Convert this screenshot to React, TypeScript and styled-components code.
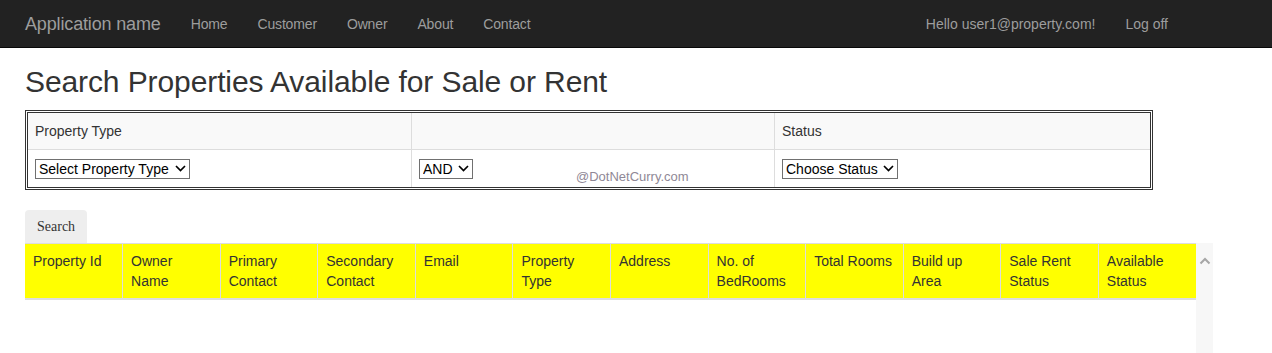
import * as React from "react"
import styled, { createGlobalStyle } from "styled-components"

const GlobalStyle = createGlobalStyle`
  html, body {
    margin: 0;
    padding: 0;
    overflow: hidden;
    background: #fff;
  }
  body {
    font-family: "Liberation Sans", Arial, sans-serif;
    font-size: 14px;
    line-height: 20px;
    color: #333;
  }
`

const NavBar = styled.nav`
  display: flex;
  align-items: center;
  height: 47px;
  padding: 0 89px 0 10px;
  background: #222;
  border-bottom: 1px solid #080808;
`

const Brand = styled.a`
  padding: 0 15px;
  font-size: 18px;
  line-height: 20px;
  letter-spacing: -0.15px;
  color: #9d9d9d;
  text-decoration: none;
`

const NavList = styled.ul<{ $right?: boolean }>`
  display: flex;
  margin: 0;
  padding: 0;
  list-style: none;
  margin-left: ${(p) => (p.$right ? "auto" : "0")};
`

const NavLink = styled.a<{ $tight?: boolean }>`
  display: block;
  padding: 14px 15px;
  color: #9d9d9d;
  text-decoration: none;
  line-height: 20px;
  letter-spacing: ${(p) => (p.$tight ? "-0.15px" : "0")};
`

const Page = styled.main`
  padding: 0 25px;
`

const Title = styled.h2`
  margin: 17px 0 12px;
  font-size: 30px;
  font-weight: 500;
  line-height: 33px;
  letter-spacing: -0.1px;
  color: #333;
`

const FilterWrap = styled.div`
  position: relative;
  width: 1128px;
  margin-bottom: 20px;
`

const FilterTable = styled.table`
  width: 1128px;
  table-layout: fixed;
  border-collapse: separate;
  border-spacing: 0;
  border: 3px double #333;
`

const FilterCell = styled.td<{ $head?: boolean; $last?: boolean }>`
  height: 20px;
  padding: 8px 8px 8px 7px;
  background: ${(p) => (p.$head ? "#f9f9f9" : "#fff")};
  border-right: ${(p) => (p.$last ? "none" : "1px solid #ddd")};
  border-bottom: ${(p) => (p.$head ? "1px solid #ddd" : "none")};
  vertical-align: middle;
`

const SelectWrap = styled.span`
  position: relative;
  display: inline-block;
  vertical-align: middle;
`

const Select = styled.select<{ $w: number }>`
  appearance: none;
  -webkit-appearance: none;
  display: block;
  width: ${(p) => p.$w}px;
  height: 20px;
  padding: 0 18px 0 3px;
  margin: 0;
  border: 1px solid #707070;
  border-radius: 0;
  background: #fff;
  color: #000;
  font-family: "Liberation Sans", Arial, sans-serif;
  font-size: 14px;
  line-height: 18px;
`

const Chevron = styled.svg`
  position: absolute;
  right: 4px;
  top: 6px;
  pointer-events: none;
`

const Watermark = styled.span`
  position: absolute;
  left: 551px;
  top: 57px;
  font-size: 13px;
  color: #8f8896;
`

const SearchButton = styled.button`
  display: block;
  height: 33px;
  padding: 0 12px;
  border: none;
  border-radius: 4px 4px 0 0;
  background: #eee;
  color: #333;
  font-family: "Liberation Serif", "Times New Roman", serif;
  font-size: 14px;
`

const GridRow = styled.div`
  display: flex;
  height: 110px;
`

const ResultTable = styled.table`
  width: 1171px;
  table-layout: fixed;
  border-collapse: collapse;
  align-self: flex-start;
`

const HeadCell = styled.th`
  padding: 7px 8px 7px;
  background: #ffff00;
  color: #333;
  font-weight: normal;
  text-align: left;
  vertical-align: top;
  line-height: 20px;
  border-top: 1px solid #ddd;
  border-left: 1px solid #ddd;
  border-bottom: 2px solid #ddd;
  &:first-child {
    border-left: none;
  }
`

const ScrollTrack = styled.div`
  display: flex;
  justify-content: center;
  width: 17px;
  padding-top: 14px;
  background: #f7f7f7;
`

const columns = [
  "Property Id",
  "Owner Name",
  "Primary Contact",
  "Secondary Contact",
  "Email",
  "Property Type",
  "Address",
  "No. of BedRooms",
  "Total Rooms",
  "Build up Area",
  "Sale Rent Status",
  "Available Status",
]

const Dropdown = (props: { width: number; options: string[] }) => (
  <SelectWrap>
    <Select $w={props.width} defaultValue={props.options[0]}>
      {props.options.map((o) => (
        <option key={o}>{o}</option>
      ))}
    </Select>
    <Chevron width="11" height="7" viewBox="0 0 11 7">
      <path d="M1 1l4.5 4.5L10 1" fill="none" stroke="#000" strokeWidth="1.7" />
    </Chevron>
  </SelectWrap>
)

export default function App() {
  return (
    <>
      <GlobalStyle />
      <NavBar>
        <Brand href="#">Application name</Brand>
        <NavList>
          {["Home", "Customer", "Owner", "About", "Contact"].map((l) => (
            <li key={l}>
              <NavLink $tight href="#">{l}</NavLink>
            </li>
          ))}
        </NavList>
        <NavList $right>
          <li>
            <NavLink href="#">Hello user1@property.com!</NavLink>
          </li>
          <li>
            <NavLink href="#">Log off</NavLink>
          </li>
        </NavList>
      </NavBar>
      <Page>
        <Title>Search Properties Available for Sale or Rent</Title>
        <FilterWrap>
          <FilterTable>
            <colgroup>
              <col style={{ width: 384 }} />
              <col style={{ width: 363 }} />
              <col style={{ width: 375 }} />
            </colgroup>
            <tbody>
              <tr>
                <FilterCell $head>Property Type</FilterCell>
                <FilterCell $head />
                <FilterCell $head $last>Status</FilterCell>
              </tr>
              <tr>
                <FilterCell>
                  <Dropdown width={155} options={["Select Property Type", "Flat", "Bungalow", "Shop"]} />
                </FilterCell>
                <FilterCell>
                  <Dropdown width={54} options={["AND", "OR"]} />
                </FilterCell>
                <FilterCell $last>
                  <Dropdown width={116} options={["Choose Status", "Sale", "Rent"]} />
                </FilterCell>
              </tr>
            </tbody>
          </FilterTable>
          <Watermark>@DotNetCurry.com</Watermark>
        </FilterWrap>
        <SearchButton>Search</SearchButton>
        <GridRow>
          <ResultTable>
            <thead>
              <tr>
                {columns.map((c) => (
                  <HeadCell key={c}>{c}</HeadCell>
                ))}
              </tr>
            </thead>
          </ResultTable>
          <ScrollTrack>
            <svg width="12" height="8" viewBox="0 0 12 8">
              <path d="M1.5 6.5L6 2l4.5 4.5" fill="none" stroke="#a6a6a6" strokeWidth="2" />
            </svg>
          </ScrollTrack>
        </GridRow>
      </Page>
    </>
  )
}
